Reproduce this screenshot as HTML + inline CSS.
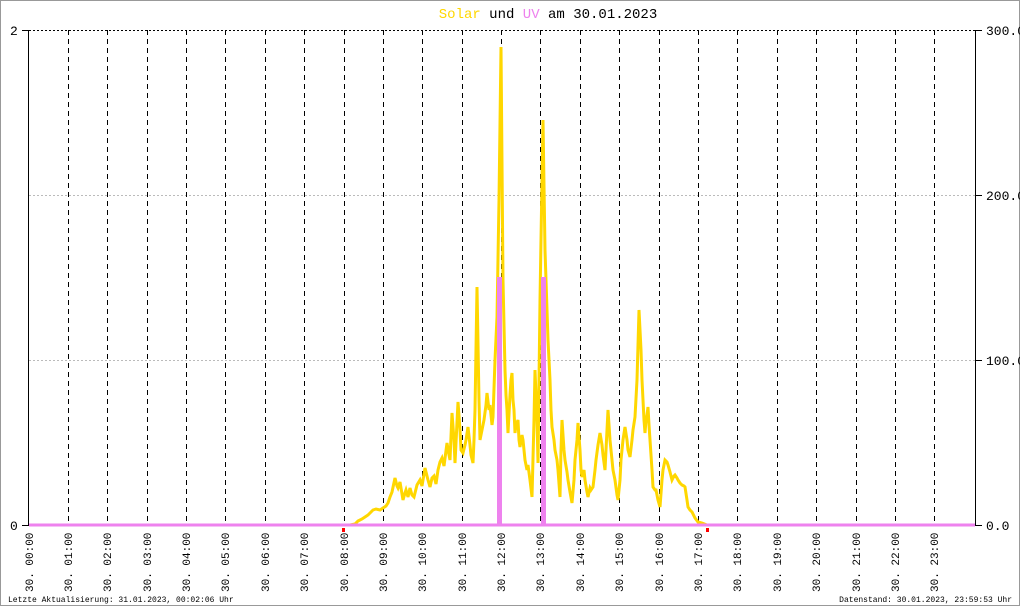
<!DOCTYPE html>
<html><head><meta charset="utf-8"><style>
html,body{margin:0;padding:0;background:#fff;}
svg{display:block;}
text{font-family:"Liberation Mono","DejaVu Sans Mono",monospace;}
</style></head><body>
<svg width="1020" height="606" viewBox="0 0 1020 606" xmlns="http://www.w3.org/2000/svg">
<rect x="0.5" y="0.5" width="1019" height="605" fill="#fff" stroke="#999" stroke-width="1"/>
<text x="548" y="18" font-size="14" text-anchor="middle"><tspan fill="#ffd700">Solar</tspan><tspan fill="#000"> und </tspan><tspan fill="#ee82ee">UV</tspan><tspan fill="#000"> am 30.01.2023</tspan></text>
<line x1="29" y1="30.5" x2="975" y2="30.5" stroke="#000" stroke-dasharray="2,2"/>
<line x1="29" y1="195.5" x2="975" y2="195.5" stroke="#bbb" stroke-dasharray="2,2"/>
<line x1="29" y1="360.5" x2="975" y2="360.5" stroke="#bbb" stroke-dasharray="2,2"/>
<g stroke="#000" stroke-dasharray="5,4">
<line x1="68.5" y1="30" x2="68.5" y2="525"/><line x1="107.5" y1="30" x2="107.5" y2="525"/><line x1="147.5" y1="30" x2="147.5" y2="525"/><line x1="186.5" y1="30" x2="186.5" y2="525"/><line x1="225.5" y1="30" x2="225.5" y2="525"/><line x1="265.5" y1="30" x2="265.5" y2="525"/><line x1="304.5" y1="30" x2="304.5" y2="525"/><line x1="344.5" y1="30" x2="344.5" y2="525"/><line x1="383.5" y1="30" x2="383.5" y2="525"/><line x1="422.5" y1="30" x2="422.5" y2="525"/><line x1="462.5" y1="30" x2="462.5" y2="525"/><line x1="501.5" y1="30" x2="501.5" y2="525"/><line x1="540.5" y1="30" x2="540.5" y2="525"/><line x1="580.5" y1="30" x2="580.5" y2="525"/><line x1="619.5" y1="30" x2="619.5" y2="525"/><line x1="659.5" y1="30" x2="659.5" y2="525"/><line x1="698.5" y1="30" x2="698.5" y2="525"/><line x1="737.5" y1="30" x2="737.5" y2="525"/><line x1="777.5" y1="30" x2="777.5" y2="525"/><line x1="816.5" y1="30" x2="816.5" y2="525"/><line x1="856.5" y1="30" x2="856.5" y2="525"/><line x1="895.5" y1="30" x2="895.5" y2="525"/><line x1="934.5" y1="30" x2="934.5" y2="525"/>
</g>
<line x1="28.5" y1="30" x2="28.5" y2="526" stroke="#000"/>
<line x1="975.5" y1="30" x2="975.5" y2="526" stroke="#000"/>
<line x1="22" y1="30.5" x2="29" y2="30.5" stroke="#000"/>
<line x1="22" y1="525.5" x2="29" y2="525.5" stroke="#000"/>
<g stroke="#000"><line x1="975" y1="30.5" x2="982" y2="30.5"/><line x1="975" y1="195.5" x2="982" y2="195.5"/><line x1="975" y1="360.5" x2="982" y2="360.5"/><line x1="975" y1="525.5" x2="982" y2="525.5"/></g>
<text x="10" y="35" font-size="13">2</text>
<text x="10" y="530" font-size="13">0</text>
<g font-size="13"><text x="986" y="35">300.0</text><text x="986" y="200">200.0</text><text x="986" y="365">100.0</text><text x="986" y="530">0.0</text></g>
<polyline fill="none" stroke="#ffd700" stroke-width="3" stroke-linejoin="miter" points="29,525 350,525 355,524 358,521 362,519 365,517 368,515 371,512 373,510 376,509 380,510 383,508 386,506 388,503 390,497 392,492 395,478 397,486 398,488 400,482 403,500 405,493 406,490 408,497 410,488 412,495 414,497 417,485 420,480 422,486 425,468 428,480 430,487 432,478 434,476 436,484 438,470 440,462 442,458 444,466 447,443 449,455 450,460 452,413 454,440 455,463 458,402 460,430 461,450 463,453 465,445 466,440 468,427 470,445 471,455 473,463 474,440 475,410 477,287 479,400 480,440 482,430 484,420 486,405 487,393 489,410 490,405 492,425 493,417 495,360 497,317 499,200 501,47 503,280 505,370 506,395 507,410 508,433 510,395 511,380 512,373 513,400 514,410 515,433 516,425 518,420 519,440 520,447 522,435 523,440 525,460 527,470 528,465 530,480 532,497 534,420 535,370 537,420 538,463 540,300 543,120 545,250 547,310 548,340 550,380 551,410 552,427 554,440 555,450 557,460 558,470 560,497 561,450 562,420 564,450 565,460 567,472 568,480 570,492 572,503 574,480 575,460 577,440 578,423 580,450 581,470 582,477 584,470 585,480 587,492 588,497 590,488 591,490 593,487 595,470 596,460 598,445 600,433 602,445 603,455 605,470 607,430 608,410 610,440 611,450 613,470 615,480 617,495 618,500 620,480 621,460 623,440 625,427 627,440 628,450 630,457 632,440 633,430 635,417 637,380 639,310 641,350 642,380 643,400 644,420 645,433 646,420 647,415 648,407 649,425 650,440 652,470 653,487 655,490 656,490 658,500 660,507 662,480 663,470 665,460 667,462 668,465 670,472 672,480 674,476 675,475 677,478 678,480 680,483 682,485 684,486 685,487 687,500 688,507 690,510 692,512 695,518 698,522 702,523 707,525 975,525"/>
<line x1="29" y1="525" x2="975" y2="525" stroke="#ee82ee" stroke-width="3"/>
<rect x="497" y="277" width="5" height="248" fill="#ee82ee"/>
<rect x="541" y="277" width="5" height="248" fill="#ee82ee"/>
<g font-size="11" fill="#000">
<text transform="translate(33,592) rotate(-90)">30. 00:00</text><text transform="translate(72,592) rotate(-90)">30. 01:00</text><text transform="translate(111,592) rotate(-90)">30. 02:00</text><text transform="translate(151,592) rotate(-90)">30. 03:00</text><text transform="translate(190,592) rotate(-90)">30. 04:00</text><text transform="translate(229,592) rotate(-90)">30. 05:00</text><text transform="translate(269,592) rotate(-90)">30. 06:00</text><text transform="translate(308,592) rotate(-90)">30. 07:00</text><text transform="translate(348,592) rotate(-90)">30. 08:00</text><text transform="translate(387,592) rotate(-90)">30. 09:00</text><text transform="translate(426,592) rotate(-90)">30. 10:00</text><text transform="translate(466,592) rotate(-90)">30. 11:00</text><text transform="translate(505,592) rotate(-90)">30. 12:00</text><text transform="translate(544,592) rotate(-90)">30. 13:00</text><text transform="translate(584,592) rotate(-90)">30. 14:00</text><text transform="translate(623,592) rotate(-90)">30. 15:00</text><text transform="translate(663,592) rotate(-90)">30. 16:00</text><text transform="translate(702,592) rotate(-90)">30. 17:00</text><text transform="translate(741,592) rotate(-90)">30. 18:00</text><text transform="translate(781,592) rotate(-90)">30. 19:00</text><text transform="translate(820,592) rotate(-90)">30. 20:00</text><text transform="translate(860,592) rotate(-90)">30. 21:00</text><text transform="translate(899,592) rotate(-90)">30. 22:00</text><text transform="translate(938,592) rotate(-90)">30. 23:00</text>
</g>
<g font-size="8" fill="#000">
<text x="8" y="602">Letzte Aktualisierung: 31.01.2023, 00:02:06 Uhr</text>
<text x="1012" y="602" text-anchor="end">Datenstand: 30.01.2023, 23:59:53 Uhr</text>
</g>
<rect x="342" y="528" width="3" height="4" fill="#f00"/>
<rect x="706" y="528" width="3" height="4" fill="#f00"/>
</svg>
</body></html>
